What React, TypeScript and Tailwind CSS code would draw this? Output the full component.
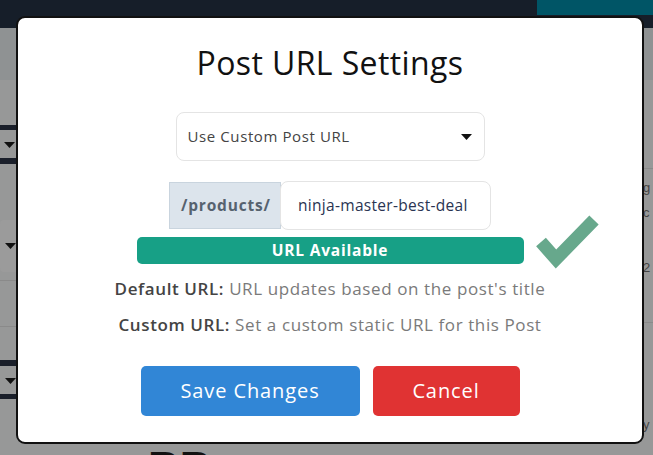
const font = { fontFamily: "'Open Sans', Lato, sans-serif" }

function Caret() {
  return (
    <svg width="11" height="6" viewBox="0 0 11 6" className="fill-[#111]">
      <path d="M0 0h11L5.5 6z" />
    </svg>
  )
}

function Backdrop() {
  return (
    <div className="flex h-[455px] w-[653px] flex-col bg-[#979898]">
      <div className="flex h-[28px] justify-end bg-[#161e29]">
        <div className="h-[15px] w-[116px] bg-[#005566]" />
      </div>
      <div className="h-[52px] bg-[#8f9293]" />
      <div className="flex flex-1 justify-between">
        <div className="flex w-[16px] flex-col">
          <div className="mt-[45px] h-[5px] bg-[#1a1f2a]" />
          <div className="mt-[12px] flex justify-end pr-[1px]"><Caret /></div>
          <div className="mt-[10px] h-[6px] bg-[#1a1f2a]" />
          <div className="mt-[56px] flex h-[52px] items-center justify-end rounded-l bg-[#9b9b9b]"><Caret /></div>
          <div className="mt-[8px] h-px bg-[#8a8a8a]" />
          <div className="mt-[45px] h-px bg-[#8a8a8a]" />
          <div className="mt-[33px] h-[6px] bg-[#1a1f2a]" />
          <div className="mt-[12px] flex justify-end"><Caret /></div>
          <div className="mt-[10px] h-[5px] bg-[#1a1f2a]" />
        </div>
        <div className="flex w-[10px] flex-col overflow-hidden text-[13px] leading-none text-[#444]" style={{ fontFamily: "'Liberation Sans', sans-serif" }}>
          <div className="mt-[88px] h-px bg-[#8a8a8a]" />
          <div className="mt-[12px]">g</div>
          <div className="mt-[12px]">c</div>
          <div className="mt-[42px]">2</div>
          <div className="mt-[48px] h-px bg-[#8a8a8a]" />
          <div className="mt-[95px]">y</div>
        </div>
      </div>
    </div>
  )
}

export default function App() {
  return (
    <div className="relative h-[455px] w-[653px] overflow-hidden" style={font}>
      <Backdrop />
      <div className="absolute left-[148px] top-[446px] h-[9px] overflow-hidden text-[44px] font-black leading-none text-[#111]" style={{ fontFamily: "'Liberation Sans', sans-serif" }}>BB</div>
      <div className="absolute left-[16px] top-[16px] flex h-[428px] w-[628px] flex-col items-center rounded-[9px] border-2 border-[#111] bg-white">
        <h1 className="mt-[25px] text-[32px] leading-[40px] tracking-[0.4px] text-[#111]">Post URL Settings</h1>

        <div className="mt-[29px] flex h-[49px] w-[309px] items-center justify-between rounded-lg border border-[#e4e4e4] pl-[11px] pr-[12px] text-[15px] tracking-[0.6px] text-[#444]">
          <span>Use Custom Post URL</span>
          <Caret />
        </div>

        <div className="mt-[20px] flex h-[49px] w-[322px] items-center">
          <div className="flex h-[47px] w-[112px] items-center border border-[#c9d4de] bg-[#dce4ec] pl-[11px] text-[15.5px] font-bold tracking-[0.8px] text-[#56626f]">
            /products/
          </div>
          <div className="-ml-px flex h-[49px] flex-1 items-center rounded-lg border border-[#e4e4e4] bg-white pl-[17px] text-[15.5px] tracking-[0.3px] text-[#2a3452]">
            ninja-master-best-deal
          </div>
        </div>

        <div className="relative mt-[7px] flex h-[27px] w-[387px] items-center justify-center rounded-[5px] bg-[#17a086] text-[15.5px] font-bold tracking-[0.8px] text-white">
          URL Available
          <svg className="absolute left-[394px] top-[-27px]" width="75" height="65" viewBox="0 0 75 65">
            <polyline points="10,32 25,49 63,10" fill="none" stroke="#67a88c" strokeWidth="13" strokeLinejoin="miter" strokeLinecap="butt" />
          </svg>
        </div>

        <p className="mt-[14px] text-[17px] leading-[22px] tracking-[0.6px] text-[#7a7a7a]">
          <span className="font-semibold text-[#444]">Default URL:</span> URL updates based on the post's title
        </p>
        <p className="mt-[14px] text-[17px] leading-[22px] tracking-[0.6px] text-[#7a7a7a]">
          <span className="font-semibold text-[#444]">Custom URL:</span> Set a custom static URL for this Post
        </p>

        <div className="mt-[30px] flex gap-[13px]">
          <button className="h-[50px] w-[219px] rounded-[5px] bg-[#3186d6] text-[20px] tracking-[0.9px] text-white">Save Changes</button>
          <button className="h-[50px] w-[147px] rounded-[5px] bg-[#e03333] text-[20px] tracking-[0.9px] text-white">Cancel</button>
        </div>
      </div>
    </div>
  )
}
